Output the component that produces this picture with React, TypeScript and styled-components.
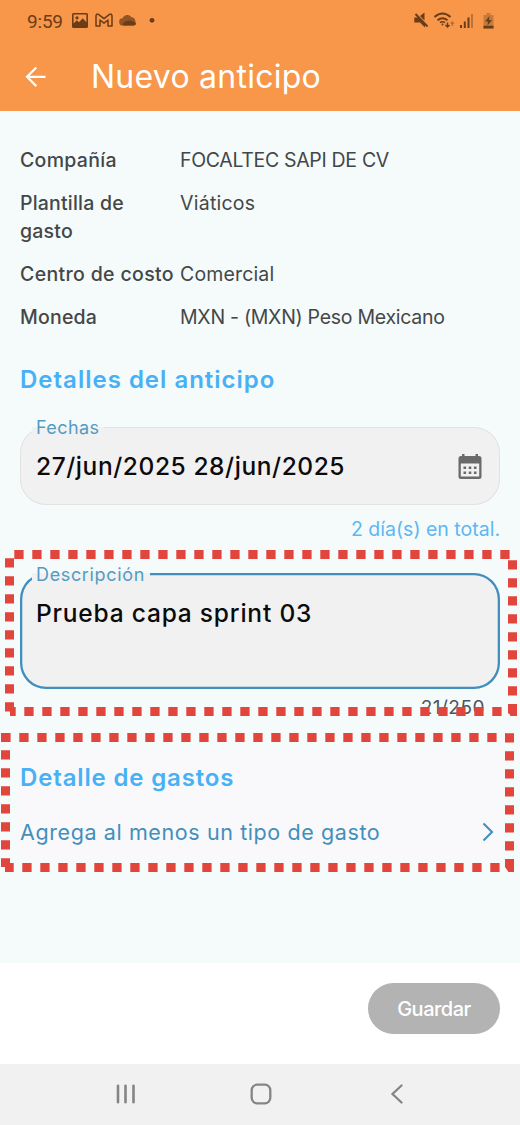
import React from "react";
import styled, { createGlobalStyle } from "styled-components";

const GlobalStyle = createGlobalStyle`
  * { box-sizing: border-box; }
  body { margin: 0; background: #f5fbfb; font-family: Inter, "Open Sans", sans-serif; }
`;

const Screen = styled.div`
  position: relative;
  display: flex;
  flex-direction: column;
  width: 520px;
  height: 1125px;
  overflow: hidden;
  background: #f5fbfb;
`;

const Header = styled.header`
  height: 111px;
  background: #f89649;
`;

const StatusBar = styled.div`
  display: flex;
  justify-content: space-between;
  height: 42px;
  padding: 0 24px 0 27px;
  color: #6a3d18;
`;

const StatusGroup = styled.div`
  display: flex;
  align-items: center;
`;

const Clock = styled.span`
  width: 45px;
  font: 400 19px/43px Roboto, sans-serif;
  letter-spacing: -0.2px;
`;

const TitleBar = styled.div`
  display: flex;
  align-items: center;
  height: 69px;
  padding-left: 25px;
`;

const Title = styled.h1`
  margin: 0 0 0 44px;
  color: #fff;
  font-size: 32px;
  font-weight: 400;
  line-height: 40px;
  letter-spacing: 0.25px;
  white-space: nowrap;
`;

const Content = styled.main`
  display: flex;
  flex-direction: column;
  height: 852px;
  padding: 35px 20px 0;
`;

const Summary = styled.dl`
  display: grid;
  grid-template-columns: 160px 1fr;
  row-gap: 15px;
  margin: 0 0 33px;
  color: #444748;
  font-size: 19.5px;
  line-height: 28px;
`;

const Term = styled.dt<{ $spacing: number; $wide?: boolean }>`
  width: ${(p) => (p.$wide ? 158 : 130)}px;
  font-weight: 500;
  letter-spacing: ${(p) => p.$spacing}px;
`;

const Value = styled.dd<{ $spacing: number }>`
  margin: 0;
  font-weight: 400;
  letter-spacing: ${(p) => p.$spacing}px;
  white-space: nowrap;
`;

const SectionTitle = styled.h2<{ $spacing: number }>`
  margin: 0;
  color: #48b0f5;
  font-size: 24px;
  font-weight: 600;
  line-height: 32px;
  letter-spacing: ${(p) => p.$spacing}px;
  white-space: nowrap;
`;

const Field = styled.div<{ $focused?: boolean }>`
  position: relative;
  display: flex;
  justify-content: space-between;
  align-items: flex-start;
  width: 480px;
  height: ${(p) => (p.$focused ? 116 : 78)}px;
  margin-top: ${(p) => (p.$focused ? 34 : 31)}px;
  padding: ${(p) => (p.$focused ? 23 : 22)}px 18px 0 16px;
  border-radius: 26px;
  background: #f1f1f1;
  box-shadow: inset 0 0 0 ${(p) => (p.$focused ? "2.3px #408fbd" : "1px #e1e3e3")};

  svg {
    margin-top: 4px;
  }
`;

const FieldLabel = styled.span<{ $spacing: number; $width: number; $top: number }>`
  position: absolute;
  top: ${(p) => p.$top}px;
  left: 12px;
  width: ${(p) => p.$width}px;
  padding-left: 4px;
  background: linear-gradient(#f5fbfb 0 ${(p) => -p.$top}px, #f1f1f1 ${(p) => -p.$top}px);
  color: #539cc4;
  font-size: 18px;
  line-height: 22px;
  letter-spacing: ${(p) => p.$spacing}px;
  white-space: nowrap;
`;

const FieldValue = styled.span<{ $spacing: number }>`
  color: #0b0b0b;
  font-size: 24.5px;
  font-weight: 450;
  line-height: 34px;
  letter-spacing: ${(p) => p.$spacing}px;
  white-space: nowrap;
`;

const DayTotal = styled.div`
  height: 26px;
  margin-top: 11px;
  margin-bottom: -3px;
  color: #5db7f3;
  font-size: 19.5px;
  line-height: 26px;
  text-align: right;
`;

const Counter = styled.div`
  height: 26px;
  margin-top: 6px;
  padding-right: 15px;
  color: #505556;
  font-size: 19px;
  line-height: 26px;
  letter-spacing: 0.5px;
  text-align: right;
`;

const Expenses = styled.section`
  width: 483px;
  height: 112px;
  margin: 28px 0 0 -2px;
  padding: 13px 6px 0 2px;
  background: #f9f9fc;
`;

const ExpenseLink = styled.div`
  display: flex;
  align-items: center;
  justify-content: space-between;
  height: 32px;
  margin-top: 22px;
  color: #428fbb;
  font-size: 21.5px;
  letter-spacing: 0.6px;
  white-space: nowrap;
`;

const Footer = styled.footer`
  display: flex;
  justify-content: flex-end;
  height: 101px;
  padding: 20px 20px 0 0;
  background: #fff;
`;

const SaveButton = styled.button`
  width: 132px;
  height: 51px;
  padding: 0;
  border: 0;
  border-radius: 26px;
  background: #b3b3b3;
  color: #fff;
  font: 500 20px/50px Inter, sans-serif;
  letter-spacing: -0.5px;
`;

const NavBar = styled.nav`
  display: flex;
  align-items: center;
  height: 61px;
  padding: 0 0 2px 115px;
  background: #f1f1f1;
`;

const HomeIcon = styled.svg`
  margin: 0 118px 0 114px;
`;

const Highlights = styled.svg`
  position: absolute;
  inset: 0;
  pointer-events: none;
`;

const Dashes = ({ d }: { d: string }) => (
  <path d={d} fill="none" stroke="#e2453c" strokeWidth="9" strokeDasharray="9.3 8.7" />
);

export default function App() {
  return (
    <>
      <GlobalStyle />
      <Screen>
        <Header>
          <StatusBar>
            <StatusGroup>
              <Clock>9:59</Clock>
              <svg width="90" height="20" viewBox="72 11 90 20">
                <path fillRule="evenodd" fill="currentColor" d="M73.500 13h13q1.500 0 1.500 1.500v12q0 1.500-1.500 1.500h-13q-1.500 0-1.500-1.500v-12q0-1.500 1.500-1.500zM73.600 14.500v9l3.200-3.200 2.200 2 3.700-4 3.700 4v-7.800z" />
                <circle cx="77" cy="17.800" r="1.600" fill="currentColor" />
                <path d="M96.500 14.500q.7-1 2-.2l5.500 4.300 5.500-4.300q1.300-.8 2 .2.500.6.500 1.500v10h-4v-6l-4 3.200-4-3.200v6h-4V16q0-.9.500-1.500z" fill="none" stroke="currentColor" strokeWidth="1.500" strokeLinejoin="round" />
                <path d="M123 25.500a3.600 3.600 0 0 1-.5-7.200 5 5 0 0 1 9-1 4.500 4.500 0 0 1 2 8.200z" fill="#925426" />
                <path d="M123 25.500c-.8-2 2-4.800 5-4.500 3-1 7.500.8 8 2.500q0 2-2 2z" fill="currentColor" />
                <circle cx="152" cy="20.300" r="2.400" fill="currentColor" />
              </svg>
            </StatusGroup>
            <StatusGroup>
              <svg width="84" height="20" viewBox="412 11 84 20" fill="none" stroke="currentColor">
                <path d="M414.300 17.500h4.500l6.200 6v4l-5-5h-5.700zM420 16l4.500-3.500v8z" fill="currentColor" stroke="none" />
                <path d="M415.500 14l12 12.500" strokeWidth="2" />
                <path d="M434.500 17q8-7 16 0M437.500 20.200q5-4 10 0" strokeWidth="1.900" />
                <path d="M440 22.700q2.500-1.800 5 0" strokeWidth="1.600" />
                <circle cx="442.500" cy="24.500" r="1" fill="currentColor" stroke="none" />
                <path d="M447.500 22.500v4.500m-2-2 2 2 2-2" strokeWidth="1.400" />
                <path d="M452.300 26v-4m-1.600 1.600 1.600-1.600 1.600 1.600" strokeWidth="1.200" opacity=".5" />
                <path d="M461 25v3M464.800 21.500V28M468.500 17.500V28" strokeWidth="2" />
                <path d="M472 14v14" strokeWidth="2" opacity=".4" />
                <path d="M483.500 15h3v-2h4v2h3v13.500h-10z" fill="#c57b3e" stroke="none" />
                <path d="M483.500 25.700h10v2.800h-10zM489.500 16l-4.500 5.500h3l-.5 4 4.500-5.500h-3z" fill="currentColor" stroke="none" />
              </svg>
            </StatusGroup>
          </StatusBar>
          <TitleBar>
            <svg width="22" height="22" viewBox="0 0 22 22" fill="none" stroke="#fff" strokeWidth="2.200">
              <path d="M11.300 1.500 2 10.800l9.300 9.300M2 10.800h18.500" />
            </svg>
            <Title>Nuevo anticipo</Title>
          </TitleBar>
        </Header>

        <Content>
          <Summary>
            <Term $spacing={0.3}>Compañía</Term>
            <Value $spacing={-0.32}>FOCALTEC SAPI DE CV</Value>
            <Term $spacing={0.2}>Plantilla de gasto</Term>
            <Value $spacing={0.25}>Viáticos</Value>
            <Term $spacing={0.35} $wide>Centro de costo</Term>
            <Value $spacing={0.15}>Comercial</Value>
            <Term $spacing={0.2}>Moneda</Term>
            <Value $spacing={-0.27}>MXN - (MXN) Peso Mexicano</Value>
          </Summary>

          <SectionTitle $spacing={1}>Detalles del anticipo</SectionTitle>

          <Field>
            <FieldLabel $spacing={0.4} $width={72} $top={-10}>Fechas</FieldLabel>
            <FieldValue $spacing={0.57}>27/jun/2025 28/jun/2025</FieldValue>
            <svg width="24" height="27" viewBox="0 0 24 27">
              <path fill="#6a6a6a" fillRule="evenodd" d="M4 1h2.500v2h11V1H20v2h1q2.500 0 2.500 2.500v18q0 2.500-2.500 2.500H3Q.5 26 .5 23.500v-18Q.5 3 3 3h1zM2.800 10.500v13h18.400v-13z" />
              <path stroke="#6a6a6a" strokeWidth="2.600" strokeDasharray="2.600 2.600" d="M5.500 14.800H18.500M5.500 19.800H18.500" />
            </svg>
          </Field>
          <DayTotal>2 día(s) en total.</DayTotal>

          <Field $focused>
            <FieldLabel $spacing={0.65} $width={118} $top={-9}>Descripción</FieldLabel>
            <FieldValue $spacing={0.8}>Prueba capa sprint 03</FieldValue>
          </Field>
          <Counter>21/250</Counter>

          <Expenses>
            <SectionTitle $spacing={0.85}>Detalle de gastos</SectionTitle>
            <ExpenseLink>
              Agrega al menos un tipo de gasto
              <svg width="14" height="20" viewBox="0 0 14 20" fill="none" stroke="currentColor" strokeWidth="2.100">
                <path d="M2.500 1.500 11 10l-8.500 8.500" />
              </svg>
            </ExpenseLink>
          </Expenses>
        </Content>

        <Footer>
          <SaveButton>Guardar</SaveButton>
        </Footer>

        <NavBar>
          <svg width="21" height="20" viewBox="0 0 21 20" stroke="#858585" strokeWidth="2.600" strokeLinecap="round">
            <path d="M3 1.700v16.600M10.500 1.700v16.600M18.500 1.700v16.600" />
          </svg>
          <HomeIcon width="22" height="22" viewBox="0 0 22 22" fill="none" stroke="#858585" strokeWidth="2.300">
            <rect x="1.700" y="1.700" width="18.600" height="18.600" rx="5.500" />
          </HomeIcon>
          <svg width="14" height="20" viewBox="0 0 14 20" fill="none" stroke="#858585" strokeWidth="2.300" strokeLinecap="round">
            <path d="M11.500 1.500 2.500 10l9 8.500" />
          </svg>
        </NavBar>

        <Highlights width="520" height="1125" viewBox="0 0 520 1125">
          <Dashes d="M14.300 554.500H510" />
          <Dashes d="M9.500 558.200V711.500" />
          <Dashes d="M512.500 560.200V716" />
          <Dashes d="M24.300 711.500H502" />
          <path fill="#e2453c" d="M10 707h5.700v9H10zM508 704h9v12h-6.500l-2.500-5z" />
          <Dashes d="M1.300 737.500H506" />
          <Dashes d="M5.500 750.200V867" />
          <Dashes d="M509.500 733.200V862" />
          <Dashes d="M22.300 867.500H501" />
          <path fill="#e2453c" d="M1 733h5v9H1zM5 863h8.700v9H5zM505 859h9v13h-5.500l-3.500-5z" />
        </Highlights>
      </Screen>
    </>
  );
}
